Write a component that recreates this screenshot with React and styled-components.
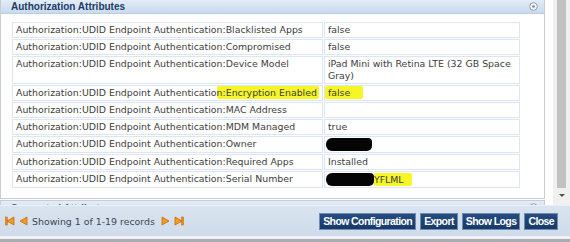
import React from 'react';
import styled, { createGlobalStyle } from 'styled-components';

const GlobalStyle = createGlobalStyle`
  html, body {
    margin: 0;
    padding: 0;
    background: #ffffff;
    overflow: hidden;
  }
`

const Page = styled.div`
  width: 570px;
  height: 242px;
  display: flex;
  flex-direction: column;
  font-family: "DejaVu Sans", Verdana, sans-serif;
  font-size: 9.4px;
  color: #3d3d3d;
  overflow: hidden;
`

const ScrollArea = styled.div`
  height: 205px;
  display: flex;
  overflow: hidden;
`

const ContentCol = styled.div`
  width: 545px;
  display: flex;
  flex-direction: column;
`

const Panel = styled.section`
  border: 1px solid #c9ccd0;
  border-top: none;
  background: #ffffff;
  & + & {
    margin-top: 1px;
    border-top: 1px solid #c9ccd0;
  }
`

const PanelHeader = styled.div`
  height: 13px;
  display: flex;
  align-items: center;
  justify-content: space-between;
  padding: 0 6px 0 10px;
  background: linear-gradient(#e3ecf7, #c9daee);
  border-bottom: 1px solid #b9cde4;
  font-family: "Liberation Sans", Arial, sans-serif;
  font-weight: bold;
  font-size: 10px;
  color: #1d3c63;
  ${props => props.$tall && `
    height: 14px;
    align-items: flex-start;
    padding-top: 2px;
    color: #4a5f7a;
  `}
`

const PanelBody = styled.div`
  padding: 7px 25px 9px 10px;
`

const Table = styled.table`
  border-collapse: separate;
  border-spacing: 1px;
  width: 510px;
`

const Cell = styled.td`
  border: 1px solid #dbe5f3;
  padding: 1px 3px;
  line-height: 12px;
  vertical-align: top;
  white-space: ${props => props.$wrap ? 'normal' : 'nowrap'};
  width: ${props => props.$label ? '302px' : 'auto'};
`

const Mark = styled.span`
  background: #f6f627;
  padding: 1px ${props => props.$right || 0}px 1px ${props => props.$left || 0}px;
  margin-left: ${props => props.$left ? -props.$left : 0}px;
  border-radius: 2px;
`

const Redact = styled.span`
  display: inline-block;
  width: ${props => props.$w}px;
  height: 13px;
  margin-left: -2px;
  vertical-align: -3px;
  background: #050505;
  border-radius: 6px 4px 5px 6px;
`

const CollapseIcon = styled.svg`
  width: 9px;
  height: 9px;
  flex: none;
`

const Gap = styled.div`
  width: 8px;
  flex: none;
`

const Scrollbar = styled.div`
  width: 17px;
  background: #f0f0f0;
  display: flex;
  flex-direction: column;
  align-items: center;
`

const Thumb = styled.div`
  width: 9px;
  height: 188px;
  background: #c1c1c1;
`

const ArrowDown = styled.div`
  margin-top: 6px;
  width: 0;
  height: 0;
  border-left: 3px solid transparent;
  border-right: 3px solid transparent;
  border-top: 3px solid #505050;
`

const Footer = styled.div`
  height: 30px;
  display: flex;
  align-items: center;
  justify-content: space-between;
  padding: 0 12px 0 5px;
  background: linear-gradient(#dae4f0, #cfdbea);
  border-top: 1px solid #e9eff7;
`

const Pager = styled.div`
  display: flex;
  align-items: center;
  gap: 3px;
  color: #3a4656;
`

const PagerText = styled.span`
  margin: 0 3px 0 1px;
`

const PagerIcon = styled.svg`
  width: 10px;
  height: 10px;
  display: block;
`

const Buttons = styled.div`
  display: flex;
  gap: 4px;
`

const Button = styled.button`
  height: 17px;
  padding: 0 3px;
  border: 1px solid #6e8db3;
  background: linear-gradient(#254d80, #18396a);
  color: #ffffff;
  font-family: "Liberation Sans", Arial, sans-serif;
  font-weight: bold;
  font-size: 10.5px;
  letter-spacing: -0.6px;
  line-height: 15px;
  cursor: pointer;
`

const BottomEdge = styled.div`
  flex: 1;
  background: #eef1f5;
  border-bottom: 3px solid #a9acb0;
`

const rows = [
  { name: 'Blacklisted Apps', value: 'false' },
  { name: 'Compromised', value: 'false' },
  { name: 'Device Model', value: 'iPad Mini with Retina LTE (32 GB Space Gray)', wrap: true },
  { name: 'Encryption Enabled', value: 'false', mark: true },
  { name: 'MAC Address', value: '' },
  { name: 'MDM Managed', value: 'true' },
  { name: 'Owner', redact: 46 },
  { name: 'Required Apps', value: 'Installed' },
  { name: 'Serial Number', redact: 48, tail: 'YFLML' },
]

const prefix = 'Authorization:UDID Endpoint Authentication'

function Collapse() {
  return (
    <CollapseIcon viewBox="0 0 9 9">
      <circle cx="4.5" cy="4.5" r="3.8" fill="#f4f7fb" stroke="#8a96a6" strokeWidth="0.9" />
      <circle cx="4.5" cy="4.5" r="1.3" fill="#7a8696" />
    </CollapseIcon>
  )
}

function PagerButton({ dir, bar }) {
  // orange arrows of the pager
  const tri = dir === 'left' ? '9,1 9,9 2,5' : '1,1 1,9 8,5'
  return (
    <PagerIcon viewBox="0 0 10 10">
      {bar && dir === 'left' && <rect x="0.5" y="1" width="1.8" height="8" fill="#f08c12" stroke="#c25f00" strokeWidth="0.5" />}
      <polygon points={tri} fill="#f59a1c" stroke="#c25f00" strokeWidth="0.7" strokeLinejoin="round" />
      {bar && dir === 'right' && <rect x="7.7" y="1" width="1.8" height="8" fill="#f08c12" stroke="#c25f00" strokeWidth="0.5" />}
    </PagerIcon>
  )
}

function AttrRow({ row }) {
  return (
    <tr>
      <Cell $label>
        {row.mark ? (
          <>
            {prefix.slice(0, -1)}<Mark $right={2}>{prefix.slice(-1)}:{row.name}</Mark>
          </>
        ) : (
          `${prefix}:${row.name}`
        )}
      </Cell>
      <Cell $wrap={row.wrap}>
        {row.mark && <Mark $left={3} $right={13}>{row.value}</Mark>}
        {!row.mark && row.value}
        {row.redact && <Redact $w={row.redact} />}
        {row.tail && <Mark $right={8}>{row.tail}</Mark>}
      </Cell>
    </tr>
  )
}

export default function App() {
  return (
    <Page>
      <GlobalStyle />
      <ScrollArea>
        <ContentCol>
          <Panel>
            <PanelHeader>
              Authorization Attributes
              <Collapse />
            </PanelHeader>
            <PanelBody>
              <Table>
                <tbody>
                  {rows.map(row => <AttrRow key={row.name} row={row} />)}
                </tbody>
              </Table>
            </PanelBody>
          </Panel>
          <Panel>
            <PanelHeader $tall>
              Supported Attributes
              <Collapse />
            </PanelHeader>
          </Panel>
        </ContentCol>
        <Gap />
        <Scrollbar>
          <Thumb />
          <ArrowDown />
        </Scrollbar>
      </ScrollArea>
      <Footer>
        <Pager>
          <PagerButton dir="left" bar />
          <PagerButton dir="left" />
          <PagerText>Showing 1 of 1-19 records</PagerText>
          <PagerButton dir="right" />
          <PagerButton dir="right" bar />
        </Pager>
        <Buttons>
          <Button>Show Configuration</Button>
          <Button>Export</Button>
          <Button>Show Logs</Button>
          <Button>Close</Button>
        </Buttons>
      </Footer>
      <BottomEdge />
    </Page>
  )
}
